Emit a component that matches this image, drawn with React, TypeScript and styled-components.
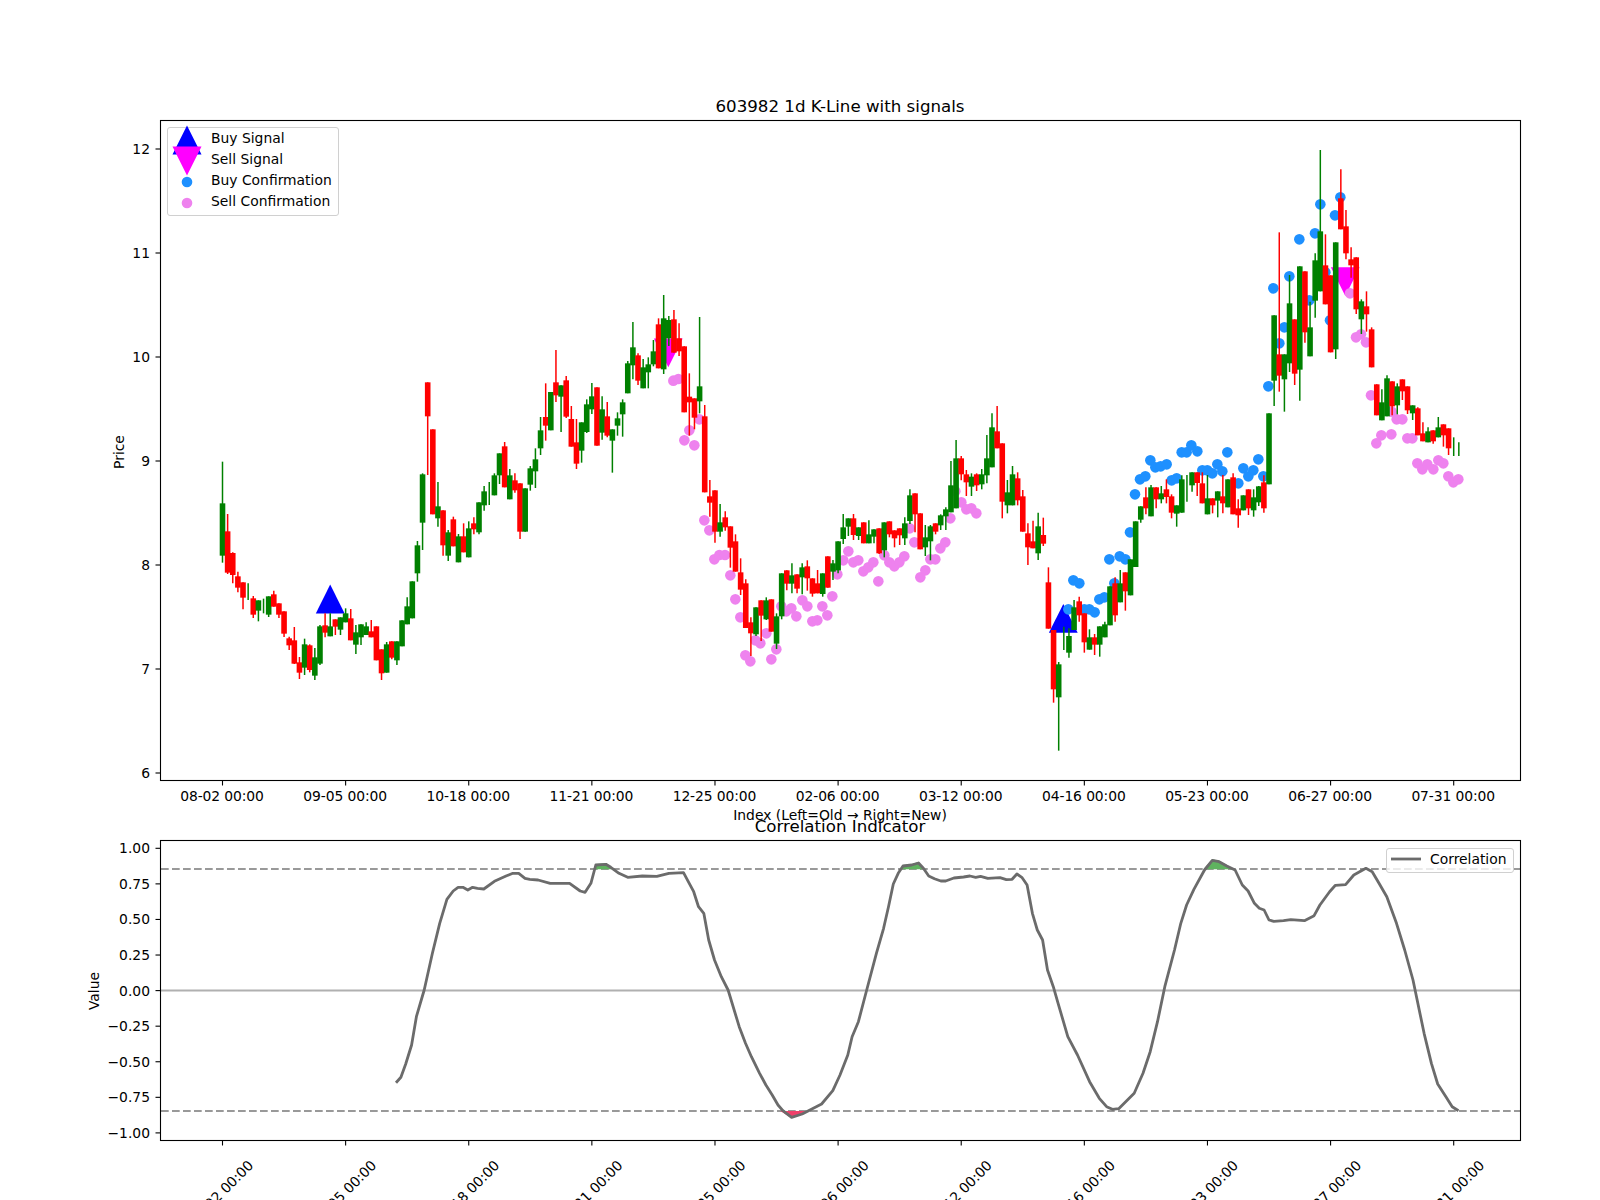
import React from 'react';
import styled, { createGlobalStyle } from 'styled-components';

type Candle = { up: boolean; bodyTop: number | null; bodyBottom: number | null; wickTop: number; wickBottom: number };
type Row = ['G' | 'R', number, number, number, number];

const GlobalStyle = createGlobalStyle`
  html, body {
    margin: 0;
    padding: 0;
    background: #fff;
  }
`;

const Figure = styled.main`
  width: 1600px;
  height: 1200px;
  overflow: hidden;
  background: #fff;
  color: #000;
  font-family: 'DejaVu Sans', sans-serif;
`;

const Panel = styled.section<{ $height: number }>`
  position: relative;
  height: ${(p) => p.$height}px;
`;

const PlotSvg = styled.svg`
  display: block;
  width: 1600px;
  height: 100%;
  overflow: visible;
`;

const Label = styled.text`
  font-family: 'DejaVu Sans', sans-serif;
  font-size: 13.89px;
  fill: #000;
`;

const TickLabel = styled(Label)`
  letter-spacing: -0.1px;
`;

const Title = styled(Label)`
  font-size: 16.67px;
`;

const TickMark = styled.line`
  stroke: #000;
  stroke-width: 1.1;
`;

const Spine = styled.rect`
  fill: none;
  stroke: #000;
  stroke-width: 1.1;
`;

const Legend = styled.div<{ $left: number; $top: number; $width: number; $height: number }>`
  position: absolute;
  left: ${(p) => p.$left}px;
  top: ${(p) => p.$top}px;
  width: ${(p) => p.$width}px;
  height: ${(p) => p.$height}px;
  box-sizing: border-box;
  background: rgba(255, 255, 255, 0.8);
  border: 1px solid #d0d0d0;
  border-radius: 3px;
  font-size: 13.89px;
`;

const LegendRow = styled.div`
  display: flex;
  align-items: center;
  gap: 9px;
  height: 20.9px;
  padding-left: 4px;
  white-space: nowrap;
`;

const LegendMarker = styled.svg`
  flex: none;
  width: 30px;
  height: 20px;
  overflow: visible;
`;

const LineLegendRow = styled(LegendRow)`
  height: 21px;
`;

const X0 = 222.5;
const X_STEP = 5.13;
const candleX = (i: number) => X0 + X_STEP * i;
const priceY = (p: number) => 773 - 104 * (p - 6);
const corrY = (v: number) => 990.6 - 142.3 * v;

const DATES = ['08-02', '09-05', '10-18', '11-21', '12-25', '02-06', '03-12', '04-16', '05-23', '06-27', '07-31'];
const xTicks = DATES.map((d, n) => ({ x: candleX(n * 24), label: `${d} 00:00` }));

// Rows are traced in thirds of a pixel from originY: colour, body top, body bottom, wick top, wick bottom.
// A body of 0,0 means the candle only shows its wick.
const traced = (originY: number, rows: Row[]): Candle[] =>
  rows.map(([c, bt, bb, wt, wb]) => ({
    up: c === 'R',
    bodyTop: bt === bb ? null : originY + bt / 3,
    bodyBottom: bt === bb ? null : originY + bb / 3,
    wickTop: originY + wt / 3,
    wickBottom: originY + wb / 3,
  }));

const candles: Candle[] = [
  ...traced(380, [
    ['G', 370, 527, 245, 548], ['R', 454, 578, 402, 582], ['R', 519, 585, 517, 610], ['R', 589, 623, 575, 637],
    ['R', 607, 653, 607, 688], ['G', 0, 0, 610, 660], ['R', 655, 704, 648, 714], ['G', 661, 692, 661, 724],
    ['G', 0, 0, 656, 700], ['G', 649, 704, 649, 711], ['R', 643, 680, 632, 680], ['R', 670, 704, 670, 714],
    ['R', 694, 761, 694, 771], ['R', 775, 796, 770, 810], ['R', 781, 851, 741, 852], ['R', 847, 878, 831, 897],
    ['G', 793, 863, 776, 885], ['R', 796, 870, 793, 877], ['G', 832, 887, 804, 900], ['G', 739, 851, 735, 855],
    ['R', 736, 758, 700, 772], ['G', 739, 769, 700, 769], ['R', 718, 740, 718, 765], ['G', 712, 749, 712, 765],
    ['G', 700, 727, 685, 727], ['R', 715, 781, 687, 781], ['G', 757, 794, 735, 822], ['G', 733, 772, 733, 795],
    ['G', 739, 765, 727, 765], ['R', 754, 772, 720, 772], ['R', 739, 841, 739, 841], ['R', 808, 880, 808, 900],
    ['G', 793, 878, 786, 878], ['R', 784, 833, 784, 838], ['G', 784, 841, 784, 855], ['G', 721, 799, 721, 799],
    ['G', 679, 733, 652, 733], ['G', 604, 715, 604, 715], ['G', 496, 580, 483, 605], ['G', 283, 428, 280, 510],
    ['R', 7, 109, 7, 285], ['R', 148, 403, 148, 403], ['G', 379, 415, 306, 440], ['R', 391, 496, 391, 527],
    ['G', 457, 527, 450, 543], ['R', 418, 499, 410, 499], ['G', 469, 547, 462, 547], ['R', 469, 517, 430, 517],
    ['G', 445, 532, 424, 532], ['R', 430, 448, 412, 463], ['G', 367, 457, 367, 463], ['G', 334, 376, 318, 392],
    ['G', 0, 0, 306, 375], ['G', 286, 346, 280, 346], ['G', 220, 286, 220, 312], ['R', 199, 322, 186, 322],
    ['G', 286, 358, 267, 358], ['R', 301, 331, 280, 338], ['R', 310, 455, 310, 477], ['G', 325, 455, 325, 455],
    ['G', 265, 314, 258, 332], ['G', 238, 274, 205, 324], ['G', 151, 205, 111, 225], ['R', 111, 137, 10, 182],
  ]),
  ...traced(270, [
    ['G', 366, 481, 366, 481], ['R', 337, 376, 240, 396], ['G', 346, 380, 346, 486], ['R', 331, 440, 318, 444],
    ['R', 447, 530, 408, 530], ['R', 517, 581, 447, 597], ['G', 457, 542, 457, 578], ['G', 403, 486, 388, 489],
    ['G', 379, 418, 339, 432], ['R', 352, 527, 352, 527], ['G', 418, 488, 379, 509], ['R', 439, 497, 396, 502],
    ['G', 478, 512, 478, 608], ['G', 445, 467, 427, 497], ['G', 397, 433, 388, 500], ['G', 280, 370, 273, 370],
    ['G', 232, 286, 156, 328], ['R', 256, 332, 250, 345], ['G', 292, 355, 267, 355], ['G', 283, 307, 262, 355],
    ['G', 244, 283, 210, 289], ['R', 163, 295, 145, 295], ['G', 145, 298, 75, 312], ['G', 150, 205, 138, 228],
    ['R', 148, 248, 120, 248], ['R', 205, 244, 160, 258], ['R', 229, 427, 229, 427], ['R', 380, 397, 310, 497],
    ['R', 385, 443, 385, 478], ['G', 349, 394, 141, 430], ['R', 439, 667, 405, 667],
  ]),
  ...traced(480, [
    ['R', 49, 68, 0, 110], ['R', 31, 155, 31, 188], ['G', 127, 155, 72, 170], ['R', 112, 142, 94, 152],
    ['R', 139, 203, 139, 263], ['R', 184, 275, 163, 275], ['R', 277, 329, 235, 345], ['R', 310, 444, 298, 444],
    ['R', 427, 460, 412, 528], ['G', 382, 463, 382, 468], ['R', 361, 407, 361, 483], ['G', 361, 418, 352, 420],
    ['R', 358, 455, 358, 455], ['G', 409, 491, 400, 507], ['G', 280, 409, 280, 418], ['R', 271, 311, 271, 331],
    ['G', 286, 311, 250, 340], ['R', 283, 326, 283, 340], ['G', 262, 292, 250, 343], ['R', 259, 295, 241, 332],
    ['R', 295, 341, 295, 350], ['R', 310, 340, 270, 340], ['G', 280, 342, 280, 350], ['R', 229, 323, 229, 323],
    ['G', 250, 275, 240, 300], ['G', 184, 271, 184, 280], ['G', 142, 177, 102, 192], ['G', 115, 140, 115, 168],
    ['R', 115, 165, 102, 180], ['G', 142, 168, 142, 180], ['R', 127, 190, 127, 190], ['G', 163, 190, 121, 190],
    ['G', 148, 170, 148, 190], ['R', 145, 220, 145, 222], ['G', 127, 211, 127, 232], ['R', 124, 163, 124, 172],
    ['R', 151, 175, 151, 202], ['R', 145, 166, 145, 195], ['G', 130, 175, 112, 195], ['G', 46, 123, 28, 132],
    ['R', 40, 103, 40, 157], ['R', 100, 208, 100, 208], ['G', 172, 202, 135, 228], ['G', 139, 184, 135, 241],
  ]),
  ...traced(395, [
    ['R', 385, 410, 385, 418], ['G', 361, 391, 358, 405], ['G', 343, 364, 337, 405], ['G', 271, 352, 198, 352],
    ['G', 190, 340, 135, 340], ['R', 190, 238, 183, 256], ['R', 238, 262, 225, 303], ['G', 245, 275, 235, 303],
    ['R', 238, 271, 235, 288], ['G', 238, 268, 222, 283], ['G', 190, 241, 120, 265], ['G', 97, 217, 55, 217],
    ['R', 109, 160, 33, 160], ['R', 145, 320, 145, 370], ['G', 292, 331, 255, 355], ['G', 238, 331, 213, 331],
    ['R', 250, 316, 232, 331],
  ]),
  ...traced(400, [
    ['R', 289, 395, 270, 395], ['R', 400, 442, 370, 495], ['R', 424, 445, 362, 445], ['G', 379, 460, 338, 480],
    ['R', 405, 431, 353, 438], ['R', 547, 686, 502, 686], ['R', 690, 868, 690, 908], ['G', 793, 892, 786, 1052],
    ['G', 0, 0, 680, 750], ['G', 708, 758, 685, 773], ['G', 622, 690, 600, 690], ['R', 604, 646, 590, 665],
    ['R', 640, 727, 640, 758], ['G', 712, 749, 688, 749], ['R', 712, 734, 702, 765], ['G', 679, 734, 679, 770],
    ['G', 673, 712, 665, 712], ['G', 559, 676, 559, 676], ['R', 550, 646, 532, 665], ['G', 550, 607, 510, 607],
    ['R', 517, 574, 517, 632], ['G', 478, 586, 478, 586], ['G', 364, 501, 364, 501], ['G', 319, 359, 319, 368],
    ['R', 292, 325, 262, 343], ['G', 262, 349, 255, 349], ['R', 262, 298, 262, 325], ['G', 280, 298, 258, 310],
    ['R', 268, 291, 238, 310], ['R', 289, 338, 283, 355], ['G', 316, 341, 316, 380], ['G', 238, 338, 226, 338],
    ['G', 0, 0, 225, 305], ['G', 217, 256, 217, 275], ['R', 217, 249, 217, 288], ['R', 250, 310, 217, 310],
    ['G', 295, 343, 225, 343], ['R', 295, 316, 295, 340], ['G', 274, 302, 274, 352], ['R', 289, 310, 225, 340],
    ['G', 238, 322, 238, 322], ['R', 232, 343, 220, 343], ['R', 325, 346, 298, 383], ['G', 286, 331, 286, 331],
    ['R', 268, 325, 268, 345], ['G', 292, 331, 268, 350], ['G', 259, 307, 258, 318], ['R', 247, 325, 226, 338],
    ['G', 40, 253, 40, 253],
  ]),
  ...traced(130, [
    ['G', 556, 752, 556, 828], ['R', 673, 737, 307, 785], ['G', 673, 748, 673, 845], ['G', 520, 700, 435, 726],
    ['R', 568, 731, 568, 765], ['G', 409, 719, 409, 812], ['R', 424, 607, 424, 638], ['G', 592, 679, 515, 679],
    ['G', 391, 512, 370, 563], ['G', 304, 484, 60, 484], ['R', 406, 523, 313, 523], ['R', 436, 667, 436, 667],
    ['G', 337, 658, 337, 687], ['R', 205, 298, 118, 298], ['R', 289, 370, 240, 388], ['R', 388, 406, 352, 443],
    ['R', 382, 538, 382, 552], ['G', 514, 568, 508, 612], ['R', 529, 553, 484, 605], ['R', 598, 712, 592, 712],
    ['R', 763, 856, 763, 856], ['G', 817, 871, 778, 871], ['G', 745, 859, 736, 859], ['R', 754, 829, 754, 856],
    ['G', 769, 826, 760, 853], ['R', 748, 784, 748, 810], ['R', 769, 841, 769, 852], ['G', 826, 850, 826, 870],
    ['R', 835, 916, 832, 916], ['R', 910, 934, 877, 934], ['G', 904, 937, 892, 937], ['R', 901, 934, 901, 941],
    ['G', 892, 922, 861, 922], ['R', 883, 916, 883, 950], ['R', 895, 955, 895, 975], ['G', 0, 0, 922, 978],
    ['G', 0, 0, 937, 978],
  ]),
];

const dots = (left: number, top: number, pts: number[][]) => pts.map(([x, y]) => [left + x / 3, top + y / 3]);

const sellDots = [
  ...dots(550, 270, [
    [370, 332], [385, 327], [448, 448], [418, 481], [403, 511], [433, 526], [463, 751], [478, 781], [493, 868],
    [508, 855], [525, 855],
  ]),
  ...dots(680, 480, [
    [151, 286], [166, 358], [181, 412], [196, 526], [211, 544], [226, 481], [241, 490], [259, 460], [274, 538],
    [289, 508], [304, 379], [319, 394], [334, 385], [349, 409], [367, 361], [382, 379], [397, 424], [412, 421],
    [427, 379], [442, 406], [457, 349], [472, 283], [490, 241], [505, 214], [520, 247], [535, 241], [550, 274],
    [565, 262], [580, 247], [595, 304], [613, 226], [628, 247], [643, 259], [658, 247], [673, 229], [689, 145],
    [703, 187], [721, 292], [736, 271], [751, 238], [766, 238], [781, 205], [796, 187], [811, 115], [826, 34],
    [844, 67], [859, 88], [874, 85], [889, 100],
  ]),
  ...dots(1220, 130, [
    [390, 490], [408, 622], [423, 613], [438, 637], [453, 796], [515, 845], [484, 916], [469, 940], [514, 913],
    [530, 868], [547, 868], [562, 925], [577, 925], [592, 1000], [607, 1018], [622, 1003], [640, 1018], [655, 991],
    [670, 1000], [685, 1039], [700, 1057], [715, 1048],
  ]),
];

const buyDots = [
  ...dots(1000, 400, [
    [205, 628], [220, 541], [238, 550], [253, 628], [268, 628], [284, 637], [298, 598], [313, 592], [328, 478],
    [343, 550], [359, 469], [376, 478], [390, 397], [405, 283], [420, 238], [436, 229], [451, 181], [466, 202],
    [482, 199], [500, 193], [515, 241], [530, 235], [545, 157], [560, 157], [574, 136], [592, 154], [607, 211],
    [622, 211], [637, 220], [652, 193], [667, 214], [682, 157], [715, 250], [730, 205], [745, 229], [760, 211],
    [775, 178], [790, 229],
  ]),
  ...dots(1220, 130, [
    [145, 769], [160, 475], [178, 640], [193, 592], [208, 439], [238, 328], [268, 511], [285, 310], [301, 223],
    [316, 427], [330, 571], [345, 256], [361, 202],
  ]),
];

const buySignals = [[330.2, 613.4], [1063.3, 632.8]];
const sellSignals = [[668.3, 338.4], [1345.3, 267.2]];

const upTriangle = (x: number, base: number) => `${x - 14.4},${base} ${x},${base - 28.8} ${x + 14.4},${base}`;
const downTriangle = (x: number, top: number) => `${x - 14.4},${top} ${x + 14.4},${top} ${x},${top + 28.8}`;

const leftTrace = (pts: number[][]) => pts.map(([x, y]) => [80 + x / 2.063, 780 + y / 3]);
const rightTrace = (pts: number[][]) => pts.map(([x, y]) => [840 + x / 2.063, 780 + y / 3]);
const toPoints = (pts: number[][]) => pts.map(([x, y]) => `${x.toFixed(1)},${y.toFixed(1)}`).join(' ');

const corrLine = [
  ...leftTrace([
    [652, 908], [662, 892], [672, 852], [684, 795], [694, 710], [710, 630], [727, 520], [742, 430], [757, 358],
    [770, 333], [780, 322], [790, 322], [800, 330], [810, 322], [820, 325], [833, 327], [855, 304], [880, 287],
    [893, 280], [905, 280], [918, 295], [928, 298], [945, 300], [970, 310], [1010, 310], [1032, 333], [1042, 337],
    [1054, 310], [1064, 255], [1085, 253], [1095, 262], [1112, 280], [1130, 292], [1160, 288], [1190, 289],
    [1215, 280], [1245, 278], [1255, 305], [1266, 335], [1276, 380], [1287, 400], [1297, 480], [1309, 540],
    [1323, 590], [1337, 630], [1360, 740], [1373, 790], [1385, 830], [1402, 880], [1415, 915], [1428, 945],
    [1440, 975], [1450, 992], [1468, 1012], [1490, 1002], [1510, 987], [1530, 972], [1553, 932],
  ]),
  ...rightTrace([
    [0, 885], [16, 825], [25, 770], [38, 725], [55, 630], [75, 520], [90, 445], [100, 380], [110, 312], [120, 280],
    [130, 258], [148, 255], [162, 249], [172, 265], [183, 288], [195, 296], [208, 303], [218, 303], [235, 294],
    [255, 291], [268, 288], [280, 292], [290, 289], [305, 295], [330, 293], [343, 299], [355, 298], [365, 282],
    [375, 292], [386, 315], [397, 400], [407, 450], [418, 480], [428, 570], [440, 620], [450, 670], [470, 770],
    [490, 825], [515, 905], [535, 955], [550, 980], [562, 988], [575, 986], [607, 940], [625, 880], [640, 815],
    [655, 725], [670, 620], [690, 510], [703, 430], [715, 375], [730, 328], [752, 270], [768, 241], [782, 245],
    [798, 258], [815, 270], [830, 315], [842, 333], [855, 370], [865, 385], [875, 390], [885, 420], [895, 424],
    [915, 422], [930, 419], [958, 422], [978, 407], [990, 375], [1010, 335], [1022, 316], [1043, 314], [1060, 285],
    [1085, 265], [1098, 275], [1112, 310], [1128, 350], [1148, 430], [1165, 510], [1182, 600], [1205, 760],
    [1220, 850], [1233, 912], [1250, 950], [1263, 980], [1276, 992],
  ]),
];

const greenFills = [
  leftTrace([[1062, 268], [1064, 252], [1085, 250], [1097, 268]]),
  rightTrace([[128, 268], [130, 255], [148, 252], [162, 246], [174, 268]]),
  rightTrace([[750, 268], [768, 238], [782, 242], [798, 255], [810, 268]]),
];
const redFill = leftTrace([[1445, 993], [1468, 1015], [1499, 993]]);

const PriceChart: React.FC = () => (
  <PlotSvg viewBox="0 0 1600 830">
    <Title x={840} y={112} textAnchor="middle">603982 1d K-Line with signals</Title>

    {buySignals.map(([x, y]) => <polygon key={x} points={upTriangle(x, y)} fill="#0000ff" />)}
    {sellSignals.map(([x, y]) => <polygon key={x} points={downTriangle(x, y)} fill="#ff00ff" />)}
    {buyDots.map(([x, y], i) => <circle key={i} cx={x} cy={y} r={5.3} fill="#1e90ff" />)}
    {sellDots.map(([x, y], i) => <circle key={i} cx={x} cy={y} r={5.3} fill="#ee82ee" />)}

    {candles.map((c, i) => {
      const color = c.up ? '#ff0000' : '#008000';
      const x = candleX(i);
      return (
        <g key={i}>
          <line x1={x} x2={x} y1={c.wickTop} y2={c.wickBottom} stroke={color} strokeWidth={1.5} />
          {c.bodyTop !== null && c.bodyBottom !== null && (
            <rect x={x - 2.8} y={c.bodyTop} width={5.6} height={c.bodyBottom - c.bodyTop} fill={color} />
          )}
        </g>
      );
    })}

    <Spine x={160.5} y={120.5} width={1360} height={660} />
    {[6, 7, 8, 9, 10, 11, 12].map((p) => (
      <g key={p}>
        <TickMark x1={155.5} x2={160} y1={priceY(p)} y2={priceY(p)} />
        <Label x={150} y={priceY(p) + 5} textAnchor="end">{p}</Label>
      </g>
    ))}
    {xTicks.map((t) => (
      <g key={t.label}>
        <TickMark x1={t.x} x2={t.x} y1={781} y2={785.5} />
        <TickLabel x={t.x - 0.5} y={801} textAnchor="middle">{t.label}</TickLabel>
      </g>
    ))}
    <Label x={840} y={820} textAnchor="middle">Index (Left=Old → Right=New)</Label>
    <Label transform="rotate(-90 124 452)" x={124} y={452} textAnchor="middle">Price</Label>
  </PlotSvg>
);

const CorrelationChart: React.FC = () => (
  <PlotSvg viewBox="0 830 1600 370">
    <Title x={840} y={832} textAnchor="middle">Correlation Indicator</Title>

    <line x1={161} x2={1520} y1={869} y2={869} stroke="#999999" strokeWidth={2} strokeDasharray="7.7 3.3" />
    <line x1={161} x2={1520} y1={1111} y2={1111} stroke="#999999" strokeWidth={2} strokeDasharray="7.7 3.3" />
    <line x1={161} x2={1520} y1={corrY(0)} y2={corrY(0)} stroke="#b0b0b0" strokeWidth={2} />

    {greenFills.map((pts, i) => <polygon key={i} points={toPoints(pts)} fill="#5fb35f" />)}
    <polygon points={toPoints(redFill)} fill="#f0406a" />
    <polyline points={toPoints(corrLine)} fill="none" stroke="#6b6b6b" strokeWidth={2.8} strokeLinejoin="round" />

    <Spine x={160.5} y={840.5} width={1360} height={300} />
    {[1, 0.75, 0.5, 0.25, 0, -0.25, -0.5, -0.75, -1].map((v) => (
      <g key={v}>
        <TickMark x1={155.5} x2={160} y1={corrY(v)} y2={corrY(v)} />
        <Label x={150} y={corrY(v) + 5} textAnchor="end">
          {(v < 0 ? '\u2212' : '') + Math.abs(v).toFixed(2)}
        </Label>
      </g>
    ))}
    {xTicks.map((t) => (
      <g key={t.label}>
        <TickMark x1={t.x} x2={t.x} y1={1141} y2={1145.5} />
        <TickLabel transform={`rotate(-45 ${t.x + 2} 1196)`} x={t.x + 2} y={1196} textAnchor="middle">{t.label}</TickLabel>
      </g>
    ))}
    <Label transform="rotate(-90 99 991)" x={99} y={991} textAnchor="middle">Value</Label>
  </PlotSvg>
);

const App: React.FC = () => (
  <Figure>
    <GlobalStyle />
    <Panel $height={830}>
      <PriceChart />
      <Legend $left={167} $top={127} $width={172} $height={89}>
        <LegendRow>
          <LegendMarker viewBox="-15 -10 30 20"><polygon points="-14.5,14.5 0,-14.5 14.5,14.5" fill="#0000ff" transform="translate(0 2)" /></LegendMarker>
          Buy Signal
        </LegendRow>
        <LegendRow>
          <LegendMarker viewBox="-15 -10 30 20"><polygon points="-14.5,-14.5 14.5,-14.5 0,14.5" fill="#ff00ff" transform="translate(0 2)" /></LegendMarker>
          Sell Signal
        </LegendRow>
        <LegendRow>
          <LegendMarker viewBox="-15 -10 30 20"><circle cx={0} cy={2} r={5.3} fill="#1e90ff" /></LegendMarker>
          Buy Confirmation
        </LegendRow>
        <LegendRow>
          <LegendMarker viewBox="-15 -10 30 20"><circle cx={0} cy={2} r={5.3} fill="#ee82ee" /></LegendMarker>
          Sell Confirmation
        </LegendRow>
      </Legend>
    </Panel>
    <Panel $height={370}>
      <CorrelationChart />
      <Legend $left={1386} $top={17.5} $width={128} $height={25}>
        <LineLegendRow>
          <LegendMarker viewBox="0 -10 30 20"><line x1={0} x2={30} y1={0} y2={0} stroke="#6b6b6b" strokeWidth={2.8} /></LegendMarker>
          Correlation
        </LineLegendRow>
      </Legend>
    </Panel>
  </Figure>
);

export default App;
